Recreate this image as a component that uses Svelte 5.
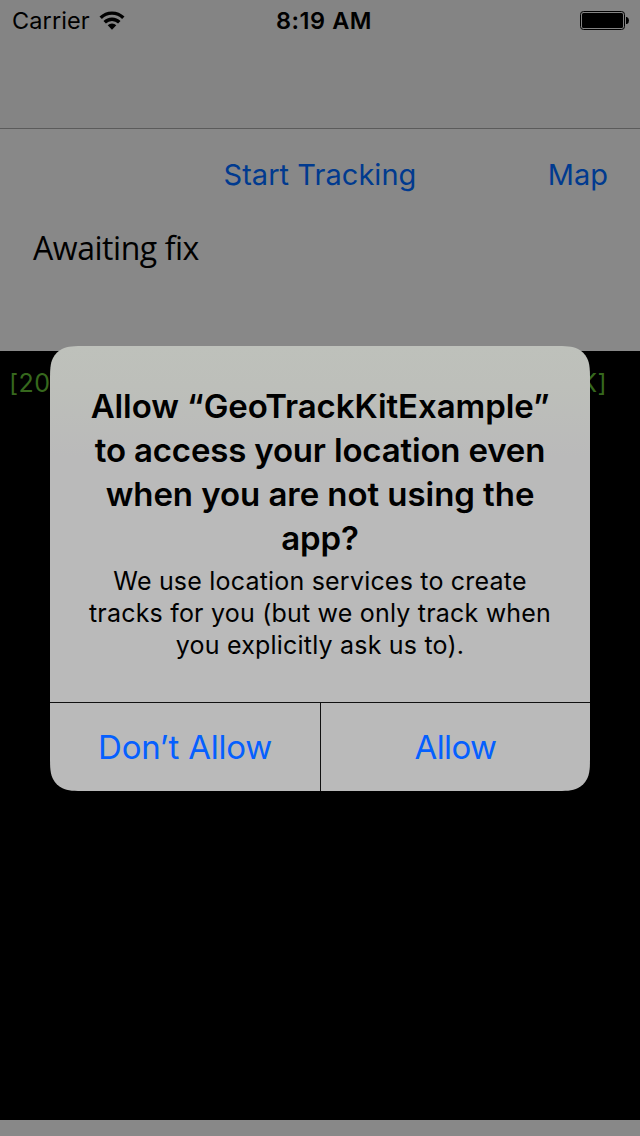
<script>
  const titleLines = [
    { text: 'Allow “GeoTrackKitExample”', spacing: -0.08 },
    { text: 'to access your location even', spacing: -0.17 },
    { text: 'when you are not using the', spacing: -0.06 },
    { text: 'app?', spacing: -0.1 }
  ];
  const messageLines = [
    'We use location services to create',
    'tracks for you (but we only track when',
    'you explicitly ask us to).'
  ];
</script>

<div class="screen">
  <header class="navbar">
    <div class="status">
      <div class="carrier">
        <span>Carrier</span>
        <svg width="26" height="20" viewBox="0 0 26 20">
          <g fill="none" stroke="#000" stroke-width="3.400">
            <path d="M1.700 6.800a16 16 0 0 1 22.600 0" />
            <path d="M5.700 11.300a10.200 10.200 0 0 1 14.600 0" />
          </g>
          <path d="M8.700 14.300a6.200 6.200 0 0 1 8.600 0L13 18.800z" />
        </svg>
      </div>
      <span class="time">8:19 AM</span>
      <svg class="battery" width="50" height="20" viewBox="0 0 50 20">
        <rect x="0.5" y="0.5" width="44" height="18" rx="3" fill="none" stroke="#000" />
        <rect x="2" y="2" width="41" height="15" rx="1.5" />
        <path d="M46 6h1q2 1 2 3.500t-2 3.500h-1z" />
      </svg>
    </div>
  </header>

  <main class="controls">
    <div class="actions">
      <span></span>
      <button class="start">Start Tracking</button>
      <button class="map">Map</button>
    </div>
    <p class="fix">Awaiting fix</p>
  </main>

  <section class="log"><span>[20</span><span>K]</span></section>
  <footer></footer>

  <div class="alert" role="alertdialog">
    <div class="copy">
      <h1>
        {#each titleLines as line}
          <span style="letter-spacing: {line.spacing}px">{line.text}</span>
        {/each}
      </h1>
      <p>
        {#each messageLines as line}<span>{line}</span>{/each}
      </p>
    </div>
    <div class="choices">
      <button class="deny">Don’t Allow</button>
      <button class="allow">Allow</button>
    </div>
  </div>
</div>

<style>
  :global(body) { margin: 0; background: #000; }
  .screen {
    position: relative;
    width: 640px;
    height: 1136px;
    display: flex;
    flex-direction: column;
    overflow: hidden;
    background: #888;
    color: #000;
    font-family: Inter, "Liberation Sans", sans-serif;
  }
  button {
    border: 0;
    padding: 0;
    margin: 0;
    background: none;
    font: inherit;
    color: inherit;
    white-space: nowrap;
  }
  .navbar {
    box-sizing: border-box;
    height: 129px;
    background: #848484;
    border-bottom: 1px solid #5b5b5b;
  }
  .status {
    display: grid;
    grid-template-columns: 1fr auto 1fr;
    align-items: center;
    height: 40px;
    padding: 1px 10px 0 18px;
    font-size: 23.500px;
    line-height: 40px;
  }
  .carrier { display: flex; align-items: center; gap: 9px; margin-left: -6px; letter-spacing: 0.100px; }
  .time { font-weight: 600; letter-spacing: 0.55px; }
  .battery { justify-self: end; }
  .controls { height: 222px; }
  .actions {
    display: grid;
    grid-template-columns: 1fr auto 1fr;
    padding: 26px 32px 0;
    height: 40px;
    color: #003a8f;
    font-size: 29px;
    line-height: 40px;
  }
  .start { letter-spacing: 0.05px; }
  .map { justify-self: end; }
  .fix {
    margin: 31px 0 0 33px;
    font-family: "Open Sans", sans-serif;
    font-size: 32px;
    line-height: 44px;
    letter-spacing: -0.45px;
  }
  .log {
    flex: 1;
    display: flex;
    justify-content: space-between;
    align-items: flex-start;
    padding: 12px 33px 0 9px;
    background: #000;
    color: #36681d;
    font-size: 25px;
    line-height: 40px;
    letter-spacing: 0.4px;
  }
  footer { height: 16px; }
  .alert {
    position: absolute;
    left: 50px;
    top: 346px;
    width: 540px;
    height: 445px;
    display: flex;
    flex-direction: column;
    clip-path: path("M0 36C0 24 0 18 3 12C5 8 8 5 12 3C18 0 24 0 36 0H504C516 0 522 0 528 3C532 5 535 8 537 12C540 18 540 24 540 36V409C540 421 540 427 537 433C535 437 532 440 528 442C522 445 516 445 504 445H36C24 445 18 445 12 442C8 440 5 437 3 433C0 427 0 421 0 409Z");
    background: linear-gradient(#bec1bb 0, #bdbfba 40px, #bababa 110px);
    text-align: center;
  }
  .copy { flex: 1; padding-top: 38px; }
  h1, .copy p { margin: 0; display: flex; flex-direction: column; white-space: nowrap; }
  h1 { font-size: 33px; line-height: 44px; font-weight: 600; }
  .copy p { margin-top: 5px; font-size: 25px; line-height: 32px; letter-spacing: 0.2px; }
  .choices {
    display: grid;
    grid-template-columns: 270px 1fr;
    height: 88px;
    border-top: 1px solid #111;
    color: #0560ff;
    font-size: 33px;
  }
  .deny { letter-spacing: -0.25px; }
  .allow { border-left: 1px solid #111; letter-spacing: -0.6px; }
</style>
